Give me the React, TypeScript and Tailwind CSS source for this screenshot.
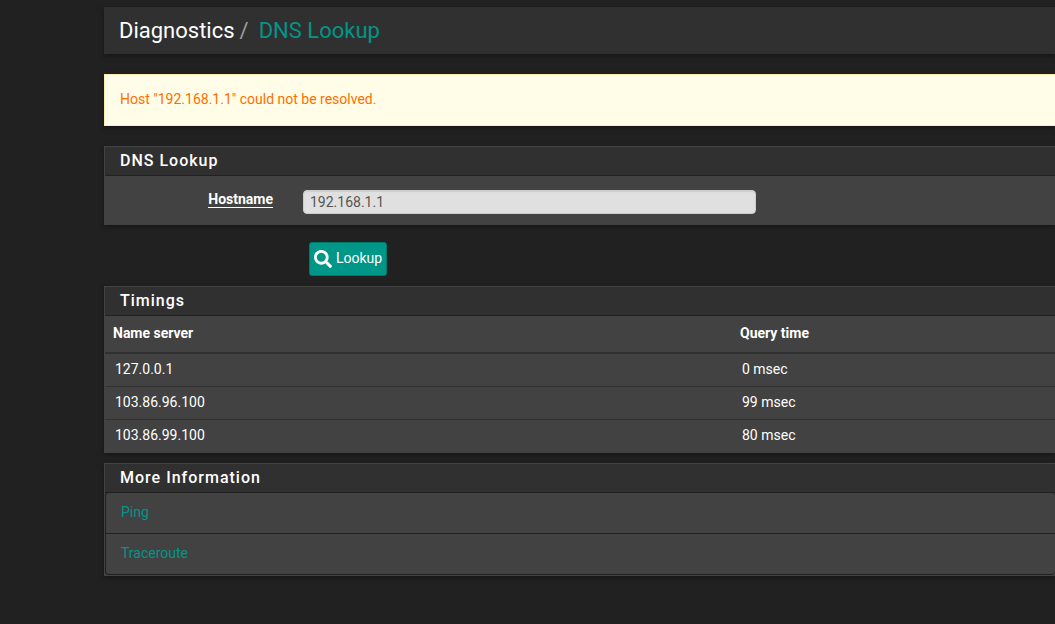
import { useState } from 'react';
import type { ReactNode } from 'react';
import { FaSearch } from 'react-icons/fa';

const timings = [
  { server: '127.0.0.1', time: '0 msec' },
  { server: '103.86.96.100', time: '99 msec' },
  { server: '103.86.99.100', time: '80 msec' },
];

const links = ['Ping', 'Traceroute'];

interface PanelProps {
  title: string;
  children: ReactNode;
}

function Panel({ title, children }: PanelProps) {
  return (
    <section className="border border-r-0 border-[#424242] bg-[#424242] shadow-[0_2px_5px_rgba(0,0,0,0.35)]">
      <h2 className="h-[29px] border-b border-[#212121] bg-[#303030] pl-[15px] text-[16px] leading-[28px] font-medium tracking-[1px]">
        {title}
      </h2>
      {children}
    </section>
  );
}

export default function App() {
  const [hostname, setHostname] = useState('192.168.1.1');

  return (
    <div className="min-h-screen bg-[#212121] pt-[7px] pl-[104px] font-['Roboto',sans-serif] text-[14px] leading-5 text-white">
      <header className="flex h-[47px] items-center bg-[#303030] px-[15px] text-[22px] shadow-[0_2px_5px_rgba(0,0,0,0.35)]">
        <h1 className="flex">
          <span>Diagnostics</span>
          <span className="px-[5px] text-[#9e9e9e]">/</span>
          <a href="#" className="pl-[5px] text-[#009688]">DNS Lookup</a>
        </h1>
      </header>

      <div
        role="alert"
        className="mt-5 border border-r-0 border-[#ffecb3] bg-[#fffde7] px-[15px] pt-[14px] pb-4 text-[#ff6f00] shadow-[0_2px_5px_rgba(0,0,0,0.35)]"
      >
        Host "192.168.1.1" could not be resolved.
      </div>

      <form className="mt-5" onSubmit={(e) => e.preventDefault()}>
        <Panel title="DNS Lookup">
          <div className="flex h-12 items-start">
            <label htmlFor="host" className="w-[183px] pt-[13px] pr-[15px] text-right font-bold">
              <span className="border-b border-white">Hostname</span>
            </label>
            <div className="flex flex-1 px-[15px] pt-[14px]">
              <input
                id="host"
                type="text"
                value={hostname}
                onChange={(e) => setHostname(e.target.value)}
                className="h-6 w-full max-w-[453px] rounded-[4px] border border-[#cccccc] bg-[#e0e0e0] px-[6px] text-[14px] text-[#555555] shadow-[inset_0_1px_1px_rgba(0,0,0,0.08)]"
              />
            </div>
          </div>
        </Panel>
        <button
          type="submit"
          className="mt-[17px] mb-[10px] ml-[205px] flex h-[34px] items-center gap-1 rounded-[3px] border border-[#00796b] bg-[#009688] px-1"
        >
          <FaSearch className="size-[18px]" />
          <span className="pb-[2px]">Lookup</span>
        </button>
      </form>

      <Panel title="Timings">
        <table className="w-full table-fixed border-collapse text-left">
          <thead>
            <tr className="h-[37px] border-b-2 border-[#303030]">
              <th className="w-[66%] px-2 pb-[2px] font-bold">Name server</th>
              <th className="px-2 pb-[2px] font-bold">Query time</th>
            </tr>
          </thead>
          <tbody>
            {timings.map((row) => (
              <tr key={row.server} className="h-[33px] border-b border-[#303030] last:border-b-0">
                <td className="px-[10px] pb-[2px]">{row.server}</td>
                <td className="px-[10px] pb-[2px]">{row.time}</td>
              </tr>
            ))}
          </tbody>
        </table>
      </Panel>

      <div className="mt-[10px]">
        <Panel title="More Information">
          <ul className="-mt-px divide-y divide-[#212121] rounded-[4px] border border-r-0 border-[#212121]">
            {links.map((link) => (
              <li key={link} className="px-[15px] pt-[9px] pb-[11px]">
                <a href="#" className="text-[#009688]">{link}</a>
              </li>
            ))}
          </ul>
        </Panel>
      </div>
    </div>
  );
}
